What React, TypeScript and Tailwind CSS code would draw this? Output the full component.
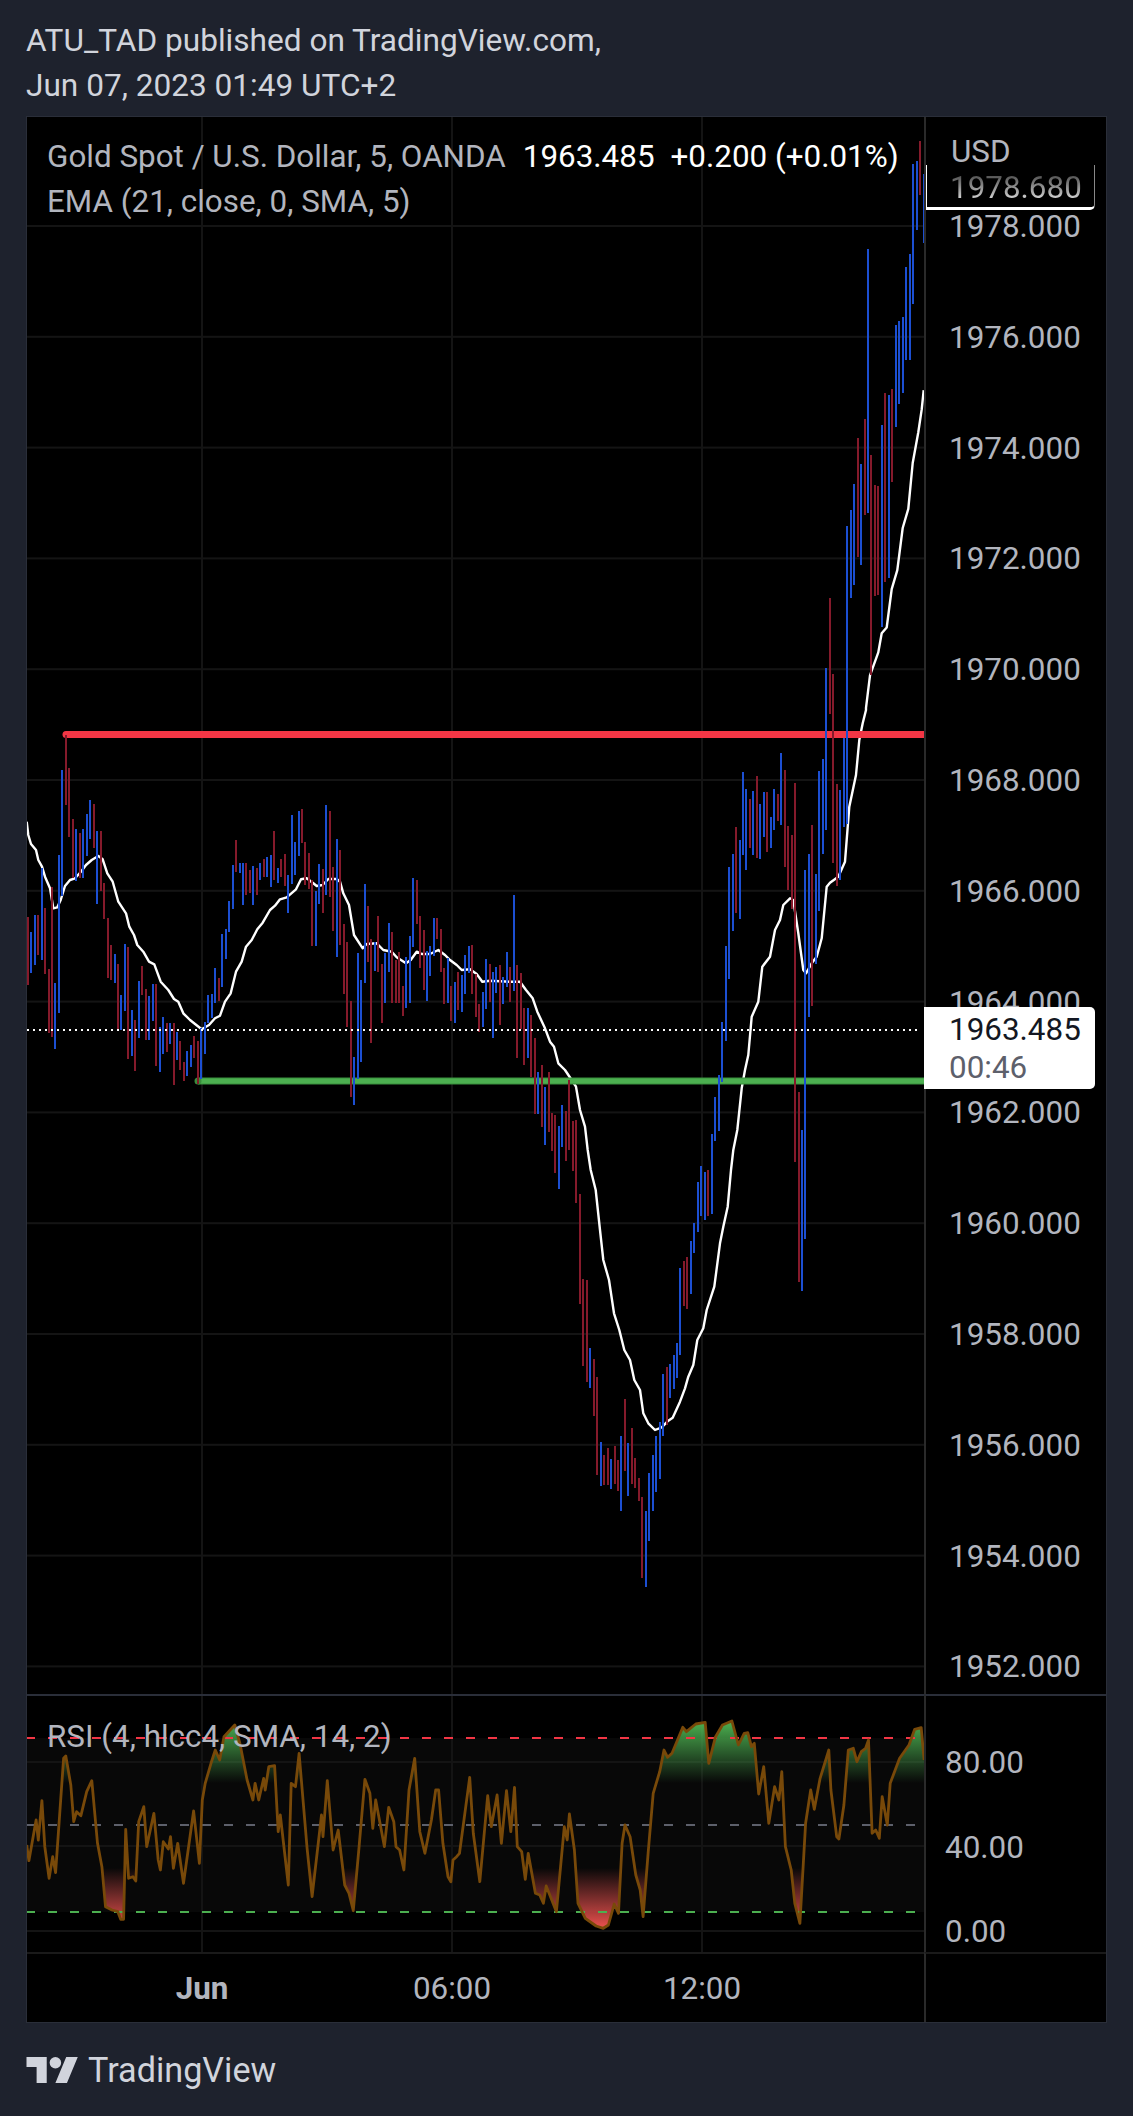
import React from 'react'

type Bar = [string, number, number]

// bar tops and bottoms are kept as read off the chart, each block with its own y origin
const BARS_A: Bar[] = [
  ['r',652,855],['b',697,819],['b',646,795],['r',646,765],['b',505,780],['r',625,822],['r',808,998],['r',562,1010],['b',850,1047],['b',465,938],
  ['b',210,588],['r',105,315],['r',205,410],['r',358,535],['b',388,543],['r',400,533],['b',388,533],['b',343,467],['b',300,417],['r',312,443],
  ['b',393,611],['r',393,573],['r',550,657],['r',655,833],['r',735,840],['b',762,850],['r',792,990],['b',885,990],['b',732,932],['r',742,1077],
  ['b',930,1068],['r',960,1112],['b',843,1013],['r',798,885],['r',867,1020],['b',888,1020],['b',852,963],['r',852,1098],['b',982,1116],['b',952,1062],
  ['r',970,1055],['b',970,1032],['r',970,1155],['b',996,1080],['r',1023,1110],['r',1086,1143],['b',1053,1128],['b',1035,1102],['r',1008,1073],['r',1023,1152],
  ['b',985,1136],['b',966,1062],['b',885,970],['b',882,955],['b',805,908],['r',834,903],['b',702,860],['b',687,777],['b',603,696],['b',495,627],
  ['r',420,516],['b',489,519],['b',489,615],['r',489,585],['r',510,580],['b',498,615],['r',504,585],['b',489,540],['r',477,531],['b',471,531],
  ['b',465,561],['r',393,540],['b',504,549],['r',477,531],['r',462,558],['b',525,639],['b',345,552],['b',426,525],['b',333,468],['r',327,429],
  ['r',426,555],['r',459,567],['r',540,738],['b',573,738],['b',492,612],['r',507,639],['b',315,585],['r',333,591],['r',501,693],['b',417,771],
  ['r',450,735],['r',672,882],['r',726,981],['r',903,1191],['b',1071,1215],['b',759,1137],['b',840,1086],['b',552,849],['r',618,786],['r',717,1029],
  ['b',726,813],['r',648,816],['r',792,969],['b',759,909],['b',669,816],['r',696,909],['r',780,909],['r',756,909],['r',858,948],['b',771,924],
  ['b',708,909],['b',534,741],['r',540,672],['r',648,804],['r',690,870],['b',753,903],['b',738,828],['b',654,768],['r',654,717],['r',687,816],
  ['r',804,912],['b',774,909],['r',858,963],['b',846,969],['r',816,930],['b',825,936],['b',765,882],['b',738,820],['r',735,882],['r',822,951],
  ['r',912,996],['b',876,981],['b',777,927],['r',792,906],['b',816,1014],['b',801,879],['r',795,975],['b',831,912],['b',756,861],['r',801,906],
  ['b',585,873],['r',795,1074],['r',819,987],['r',924,1095],['b',924,1074],['r',945,1131],['r',1014,1242],['b',1116,1242],['r',1095,1281],['b',1161,1335],
  ['r',1116,1296],['r',1239,1352],['r',1245,1418],['b',1278,1467],['b',1215,1341],['r',1233,1383],['r',1140,1350],['r',1263,1412],['r',1260,1508],
]

const BARS_B: Bar[] = [
  ['r',133,462],['r',388,648],['r',390,696],['b',594,714],['r',627,798],['r',681,975],['b',876,1008],['r',915,1005],['r',894,1005],['b',927,1017],
  ['r',888,1002],['r',930,1023],['b',858,1083],['r',747,963],['b',879,1038],['r',834,1002],['r',924,1014],['r',984,1053],['r',1041,1284],['b',1083,1311],
  ['b',969,1173],['b',915,1083],['b',858,1026],['b',816,987],['b',672,858],['r',651,825],['b',642,744],['b',615,717],['b',579,684],['b',354,615],
  ['r',333,468],['r',321,477],['b',273,432],['b',219,309],['b',96,246],['b',48,198],['b',66,210],['r',60,198],['b',-48,192],
]

const BARS_C: Bar[] = [
  ['b',1191,1323],['b',1125,1293],['b',966,1146],['b',738,1023],['b',501,837],['b',462,693],['r',381,639],['b',420,657],['b',216,465],['b',267,510],
  ['r',297,444],['b',273,465],['r',228,474],['b',312,477],['b',276,411],['r',276,456],['b',351,444],['b',267,390],['r',282,363],['b',159,375],
  ['r',210,501],['r',378,570],['r',405,627],['r',249,1386],['r',1176,1746],['b',1290,1774],['b',510,1617],['b',462,951],['r',375,918],['b',522,792],
  ['b',213,633],['b',177,462],['b',-96,390],['r',-306,42],['r',-78,489],['r',252,558],['b',270,540],['b',114,381],['b',-522,372],
]

const BARS_D: Bar[] = [
  ['b',510,598],['b',484,585],['r',438,557],['b',464,565],['r',419,515],['b',249,513],['r',455,675],['r',485,596],['r',486,595],['b',425,627],
  ['r',393,582],['b',395,578],['r',389,482],['b',325,427],['b',321,404],['b',317,393],['b',267,360],['b',254,360],['b',164,304],['b',161,230],
  ['r',141,195],['b',174,243],
]

const BARS = [
  ...BARS_A.map(([c, t, b]): Bar => [c, 700 + t / 3, 700 + b / 3]),
  ...BARS_B.map(([c, t, b]): Bar => [c, 1150 + t / 3, 1150 + b / 3]),
  ...BARS_C.map(([c, t, b]): Bar => [c, 700 + t / 3, 700 + b / 3]),
  ...BARS_D,
]

const toLine = (pts: number[][]) => pts.map(([x, y]) => `${x.toFixed(1)},${y.toFixed(1)}`).join(' ')

const EMA = [
  ...[[80,365],[85,405],[93,432],[108,450],[115,480],[126,500],[135,530],[150,565],[160,625],[172,622],[182,600],[195,558],[210,540],[225,535],[243,515],[258,495],[275,480],[295,468],[308,478],[322,520],[338,545],[355,605],[378,640],[388,680],[402,705],[412,735],[430,755],[447,785],[463,793],[482,845],[505,870],[522,897],[535,905],[550,940],[570,960],[605,988],[627,975],[645,955],[660,947],[675,905],[692,880],[708,815],[725,785],[738,740],[755,720],[772,688],[788,668],[810,630],[825,617],[840,598],[860,592],[888,568],[903,538],[920,535],[938,548],[950,558],[968,555],[985,537],[1010,537],[1020,545],[1030,580],[1047,615],[1062,705],[1088,745],[1100,732],[1130,730],[1150,750],[1175,755],[1190,772],[1218,790],[1232,780],[1250,755],[1265,762],[1290,762],[1315,750],[1335,765]]
    .map(([x, y]) => [x / 3, 700 + y / 3]),
  ...[[0,780],[20,795],[35,810],[60,808],[80,822],[97,845],[120,842],[180,845],[210,845],[228,870],[248,895],[262,935],[285,985],[300,1025],[312,1040],[325,1090],[345,1110],[365,1140],[378,1160],[390,1230],[405,1280],[413,1350]]
    .map(([x, y]) => [450 + x / 3, 700 + y / 3]),
  ...[[152,60],[167,120],[180,240],[190,330],[207,390],[222,490],[238,540],[253,600],[270,630],[283,690],[300,720],[310,790],[325,820],[345,840],[365,832],[385,812],[398,803],[420,755],[435,715],[445,680],[460,645],[472,570],[490,535],[500,480],[523,410],[540,280],[550,230],[563,170],[573,60]]
    .map(([x, y]) => [540 + x / 3, 1150 + y / 3]),
  ...[[850,1350],[862,1290],[875,1165],[885,1110],[895,1065],[905,950],[925,905],[937,800],[960,770],[975,690],[990,660],[1000,615],[1020,595],[1030,600],[1045,700],[1060,810],[1068,820],[1085,790],[1100,770],[1115,715],[1130,560],[1140,548],[1165,530],[1185,485],[1198,320],[1218,225],[1228,120],[1238,70],[1248,30]]
    .map(([x, y]) => [450 + x / 3, 700 + y / 3]),
  ...[[258,1510],[270,1425],[295,1365],[305,1315],[320,1300],[335,1200],[352,1150],[368,1040],[385,990],[398,870],[415,790],[425,730],[431,680]]
    .map(([x, y]) => [780 + x / 3, 130 + y / 2.613]),
]

const RSI = [[37,585],[40,632],[50,510],[53,570],[58,452],[62,590],[68,685],[73,620],[77,668],[88,325],[91,318],[98,405],[102,515],[106,485],[112,497],[120,425],[127,392],[135,580],[141,650],[146,770],[155,780],[163,785],[167,808],[171,808],[174,538],[178,685],[184,680],[188,693],[192,515],[199,470],[203,590],[213,490],[219,630],[222,660],[226,575],[233,597],[236,560],[240,655],[246,580],[254,700],[268,483],[276,640],[280,450],[284,400],[292,340],[298,300],[304,330],[310,260],[325,225],[332,280],[342,390],[350,450],[353,400],[358,450],[365,385],[367,420],[372,350],[380,347],[385,545],[388,495],[399,705],[403,400],[409,410],[414,310],[425,595],[432,740],[445,495],[447,560],[453,392],[461,600],[468,540],[477,705],[483,730],[489,782],[497,590],[505,388],[512,430],[516,535],[520,450],[532,590],[538,472],[545,515],[548,590],[553,600],[559,660],[566,420],[574,325],[581,545],[588,610],[597,510],[603,420],[607,420],[613,580],[620,680],[624,695],[627,630],[632,620],[636,610],[650,382],[655,550],[664,695],[675,437],[680,530],[688,435],[694,580],[701,422],[707,545],[712,412],[716,590],[722,605],[727,688],[731,610],[741,730],[747,735],[752,760],[756,708],[770,785],[781,530],[785,570],[788,492],[795,600],[800,760],[810,805],[825,828],[835,835],[842,825],[850,762],[856,790],[861,580],[865,525],[872,560],[880,675],[886,720],[890,800],[897,610],[904,430],[913,365],[919,300],[924,322],[930,310],[945,232],[950,245],[963,222],[976,217],[981,340],[990,262],[1000,225],[1013,213],[1022,285],[1030,250],[1035,248],[1040,290],[1044,280],[1050,432],[1057,350],[1064,520],[1072,410],[1078,450],[1082,365],[1087,590],[1095,660],[1100,760],[1107,820],[1115,520],[1122,420],[1127,478],[1135,385],[1147,300],[1150,420],[1158,560],[1161,567],[1168,465],[1174,300],[1181,295],[1186,335],[1192,305],[1198,295],[1202,270],[1207,550],[1212,540],[1217,565],[1221,440],[1228,525],[1232,400],[1245,325],[1258,285],[1266,238],[1275,233],[1279,330]]
  .map(([x, y]) => [x / 1.384, 1650 + y / 3])

const PRICES = ['1978.000', '1976.000', '1974.000', '1972.000', '1970.000', '1968.000', '1966.000', '1964.000', '1962.000', '1960.000', '1958.000', '1956.000', '1954.000', '1952.000']
const GRID_X = [202, 452, 702]

function MainChart() {
  return (
    <svg className="block h-full w-full" viewBox="27 117 897 1577">
      {PRICES.map((p, i) => (
        <rect key={p} x={27} y={225 + i * 110.8} width={897} height={2} fill="#141414" />
      ))}
      {GRID_X.map((x) => (
        <rect key={x} x={x - 1} y={117} width={2} height={1577} fill="#141414" />
      ))}
      <polyline points={toLine(EMA)} fill="none" stroke="#fff" strokeWidth={2.4} strokeLinejoin="round" />
      <line x1={66} x2={924} y1={734.5} y2={734.5} stroke="#f23645" strokeWidth={7} />
      <circle cx={66} cy={734.5} r={3.5} fill="#f23645" />
      <line x1={198} x2={924} y1={1081} y2={1081} stroke="#388e3c" strokeWidth={7} />
      <line x1={198} x2={924} y1={1081} y2={1081} stroke="#4caf50" strokeWidth={5} />
      <circle cx={198} cy={1081} r={3.5} fill="#388e3c" />
      {BARS.map(([c, t, b], i) => (
        <rect
          key={i}
          x={Math.round(26.7 + i * 3.4722)}
          y={t}
          width={2}
          height={b - t}
          fill={c === 'b' ? '#1c4fd2' : '#851a2b'}
          shapeRendering="crispEdges"
        />
      ))}
      <line x1={27} x2={921} y1={1030} y2={1030} stroke="#fff" strokeWidth={2} strokeDasharray="2 4" />
    </svg>
  )
}

function RsiChart() {
  const area = toLine(RSI)
  return (
    <svg className="block h-full w-full" viewBox="27 1696 897 256">
      <defs>
        <linearGradient id="rsiUp" gradientUnits="userSpaceOnUse" x1="0" x2="0" y1="1722" y2="1783">
          <stop offset="0" stopColor="#4caf50" />
          <stop offset="1" stopColor="#4caf50" stopOpacity="0" />
        </linearGradient>
        <linearGradient id="rsiDown" gradientUnits="userSpaceOnUse" x1="0" x2="0" y1="1868" y2="1929">
          <stop offset="0" stopColor="#ef5350" stopOpacity="0" />
          <stop offset="1" stopColor="#ef5350" />
        </linearGradient>
        <clipPath id="aboveBand">
          <rect x="27" y="1696" width="897" height="87" />
        </clipPath>
        <clipPath id="belowBand">
          <rect x="27" y="1868" width="897" height="84" />
        </clipPath>
      </defs>
      <rect x={27} y={1738} width={897} height={174} fill="#080808" />
      {[1762, 1846, 1931].map((y) => (
        <rect key={y} x={27} y={y - 1} width={897} height={2} fill="#141414" />
      ))}
      {GRID_X.map((x) => (
        <rect key={x} x={x - 1} y={1696} width={2} height={256} fill="#141414" />
      ))}
      <polygon points={`${area} 924,1783 27,1783`} fill="url(#rsiUp)" clipPath="url(#aboveBand)" />
      <polygon points={`${area} 924,1868 27,1868`} fill="url(#rsiDown)" clipPath="url(#belowBand)" />
      <line x1={26} x2={917} y1={1738} y2={1738} stroke="#f23645" strokeWidth={2} strokeDasharray="9 13" />
      <line x1={26} x2={917} y1={1825} y2={1825} stroke="#5d606b" strokeWidth={2} strokeDasharray="9 13" />
      <line x1={26} x2={917} y1={1912} y2={1912} stroke="#4caf50" strokeWidth={2} strokeDasharray="9 13" />
      <polyline points={area} fill="none" stroke="#784909" strokeWidth={2.8} strokeLinejoin="round" />
    </svg>
  )
}

export default function App() {
  return (
    <div className="h-[2116px] w-[1133px] bg-[#1e222d] text-[31.4px] text-[#b2b5be] [font-family:Roboto,sans-serif]">
      <header className="h-[116px] pl-[26px] pt-[18px] text-[31.6px] leading-[45px] text-[#d1d4dc]">
        <div>ATU_TAD published on TradingView.com,</div>
        <div>Jun 07, 2023 01:49 UTC+2</div>
      </header>

      <div className="relative mx-[26px] grid h-[1907px] grid-cols-[897px_182px] grid-rows-[1577px_258px_70px] border border-[#2a2e39] bg-black">
        {/* Price pane */}
        <div className="relative">
          <MainChart />
          <div className="absolute left-[20px] top-[17px] leading-[45px]">
            <div className="flex whitespace-nowrap">
              <span>Gold Spot / U.S. Dollar, 5, OANDA</span>
              <span className="ml-[17px] text-white">1963.485</span>
              <span className="ml-[16px] text-white">+0.200 (+0.01%)</span>
            </div>
            <div>EMA (21, close, 0, SMA, 5)</div>
          </div>
        </div>
        <div className="relative overflow-hidden border-l-2 border-[#2a2a2a] pl-[23px] pt-[55px]">
          {PRICES.map((p) => (
            <div key={p} className="h-[110.8px] leading-[110.8px]">{p}</div>
          ))}
          <div className="absolute left-[25px] top-[12px] leading-[45px]">USD</div>
          <div className="absolute left-[-2px] top-[48px] h-[45px] w-[171px] rounded-br-[5px] border-b-[3px] border-l-[3px] border-r border-b-white border-l-white border-r-[#888] bg-black pl-[23px] leading-[46px]">
            <span className="bg-gradient-to-b from-[#333] to-white bg-clip-text text-transparent">1978.680</span>
          </div>
        </div>

        {/* RSI pane */}
        <div className="relative border-t-2 border-[#2a2e39]">
          <RsiChart />
          <div className="absolute left-[20px] top-[18px] leading-[45px]">RSI (4, hlcc4, SMA, 14, 2)</div>
        </div>
        <div className="flex flex-col border-l-2 border-t-2 border-l-[#2a2a2a] border-t-[#2a2e39] pl-[19px] pt-[25px]">
          <div className="h-[84.5px] leading-[84.5px]">80.00</div>
          <div className="h-[84.5px] leading-[84.5px]">40.00</div>
          <div className="h-[84.5px] leading-[84.5px]">0.00</div>
        </div>

        {/* Time axis */}
        <div className="flex border-t-2 border-[#1a1a1a] pl-[50px] leading-[70px]">
          <div className="w-[250px] text-center font-bold">Jun</div>
          <div className="w-[250px] text-center">06:00</div>
          <div className="w-[250px] text-center">12:00</div>
        </div>
        <div className="border-l-2 border-t-2 border-l-[#2a2a2a] border-t-[#1a1a1a]" />

        {/* Last price tag */}
        <div className="absolute left-[897px] top-[890px] h-[82px] w-[171px] rounded-r-[5px] bg-white pl-[25px] pt-[4px] leading-[38px]">
          <div className="text-[#131722]">1963.485</div>
          <div className="text-[#5d606b]">00:46</div>
        </div>
      </div>

      <footer className="flex h-[93px] items-center gap-[9px] pl-[26px] text-[34.2px] text-[#d1d4dc]">
        <svg className="h-[26px] w-[53px] fill-[#d1d4dc]" viewBox="0 4 36 18">
          <path d="M14 22H7V11H0V4h14v18zM28 22h-8l7.5-18h8L28 22z" />
          <circle cx="20" cy="8" r="4" />
        </svg>
        <span className="pt-[3px]">TradingView</span>
      </footer>
    </div>
  )
}
